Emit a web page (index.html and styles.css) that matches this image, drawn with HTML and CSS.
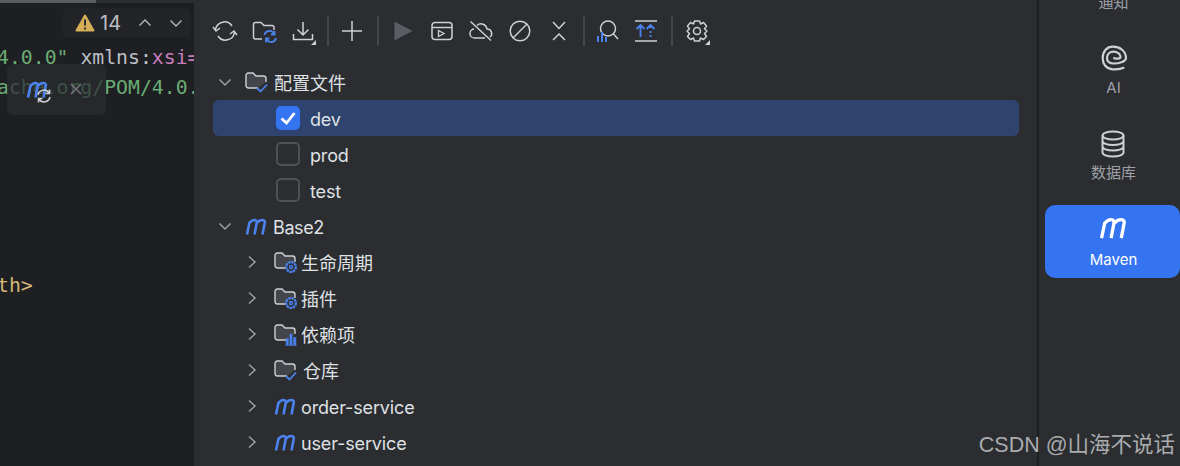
FILE: index.html
```html
<!DOCTYPE html>
<html lang="zh">
<head>
<meta charset="utf-8">
<title>Maven</title>
<link rel="stylesheet" href="styles.css">
</head>
<body>
<svg class="defs" width="0" height="0" aria-hidden="true">
  <defs>
    <symbol id="m" viewBox="0 0 22 17"><path d="M2 16.500L4.600 4M4 5.500C6 3 8 1.800 9.800 2C12 2.200 12 4 11.500 6L9.500 16.500M11.800 5C13.500 3 15.800 1.800 17.800 2C20.200 2.300 20 4 19.500 6L17.500 16.500" fill="none" stroke="currentColor" stroke-width="2.600"/></symbol>
    <symbol id="chev-d" viewBox="0 0 16 16"><path d="M2.500 5.500L8 11L13.500 5.500" fill="none" stroke="#9da0a8" stroke-width="1.500"/></symbol>
    <symbol id="chev-r" viewBox="0 0 16 16"><path d="M5 2.500L11 8L5 13.500" fill="none" stroke="#9da0a8" stroke-width="1.500"/></symbol>
    <symbol id="folder" viewBox="0 0 22 20"><path d="M13 16H3.500C2 16 1 15 1 13.500V3.500C1 2 2 1 3.500 1H8L11 4H18.500C20 4 21 5 21 6.500V10" fill="#43454a" stroke="#ced0d6" stroke-width="1.400"/></symbol>
  </defs>
</svg>
<div class="app">
  <section class="editor">
    <div class="strip"><span class="thumb"></span></div>
    <div class="inspect">
      <svg class="warn" width="20" height="18" viewBox="0 0 20 18"><path d="M10 1.500L18.500 16.500H1.500Z" fill="#d6ae58" stroke="#d6ae58" stroke-width="2" stroke-linejoin="round"/><path d="M10 5.500V11.500M10 13.500V15.500" stroke="#2b2d30" stroke-width="2"/></svg>
      <span class="inspect-count">14</span>
      <svg width="16" height="16" viewBox="0 0 16 16"><path d="M2.500 10.500L8 5L13.500 10.500" fill="none" stroke="#b4b8bf" stroke-width="1.400"/></svg>
      <svg width="16" height="16" viewBox="0 0 16 16"><path d="M2.500 5.500L8 11L13.500 5.500" fill="none" stroke="#b4b8bf" stroke-width="1.400"/></svg>
    </div>
    <div class="code code-first"><span class="str">4.0.0"</span> <span class="attr">xmlns</span>:<span class="ns">xsi=</span></div>
    <div class="code str">ache.org/POM/4.0.</div>
    <div class="code code-last tag">th&gt;</div>
    <div class="float">
      <svg class="float-m" width="22" height="17"><use href="#m"/></svg>
      <svg class="float-sync" width="16" height="16" viewBox="0 0 16 16"><path d="M2 7A6 6 0 0 1 13 5M14 9A6 6 0 0 1 3 11M13.500 1.500V5.500H9.500M2.500 14.500V10.500H6.500" fill="none" stroke="#ced0d6" stroke-width="1.500"/></svg>
      <svg class="float-x" width="14" height="14" viewBox="0 0 14 14"><path d="M2 2L12 12M12 2L2 12" stroke="#6f7277" stroke-width="1.600"/></svg>
    </div>
  </section>

  <section class="panel">
    <div class="toolbar">
      <svg class="tb" viewBox="0 0 24 24"><path d="M2.500 11A9 9 0 0 1 19 7M21.500 13A9 9 0 0 1 5 17" fill="none" stroke="#ced0d6" stroke-width="1.500"/><path d="M0 8L3 12L7 9M24 16L21 12L17 15" fill="none" stroke="#ced0d6" stroke-width="1.500"/></svg>
      <svg class="tb" viewBox="0 0 24 24"><path d="M10 20H3.500C2.500 20 1.500 19 1.500 18V5.500C1.500 4.500 2.500 3.500 3.500 3.500H9L12 6.500H20C21 6.500 22 7.500 22 8.500V11" fill="none" stroke="#ced0d6" stroke-width="1.500"/><path d="M12.500 16A5 5 0 0 1 22 15M24 19A5 5 0 0 1 14.500 20M22.500 12V15.500H19M14 23.500V19.500H17.500" fill="none" stroke="#4c82ee" stroke-width="1.800"/></svg>
      <svg class="tb" viewBox="0 0 24 24"><path d="M12 3V16M6.500 10.500L12 16L17.500 10.500M2.500 15V20.500H21.500V15" fill="none" stroke="#ced0d6" stroke-width="1.500"/><path d="M25 21V26H20Z" fill="#ced0d6"/></svg>
      <span class="sep"></span>
      <svg class="tb" viewBox="0 0 24 24"><path d="M12 2V22M2 12H22" stroke="#ced0d6" stroke-width="1.500"/></svg>
      <span class="sep sep-wide"></span>
      <svg class="tb" viewBox="0 0 24 24"><path d="M3.500 2.500L21.500 12L3.500 21.500Z" fill="#5a5d63"/></svg>
      <svg class="tb" viewBox="0 0 24 24"><rect x="2" y="3.500" width="20" height="17" rx="3" fill="none" stroke="#ced0d6" stroke-width="1.500"/><path d="M2 8.500H22" stroke="#ced0d6" stroke-width="1.500"/><path d="M8.500 11.500L14 14.500L8.500 17.500Z" fill="none" stroke="#ced0d6" stroke-width="1.300"/></svg>
      <svg class="tb" viewBox="0 0 24 24"><path d="M8 6.500A6 6 0 0 1 18 10A4.500 4.500 0 0 1 21 18M16 19H6A4.500 4.500 0 0 1 5 10M1.500 2.500L22 21.500" fill="none" stroke="#ced0d6" stroke-width="1.500"/></svg>
      <svg class="tb" viewBox="0 0 24 24"><circle cx="12" cy="12" r="9.800" fill="none" stroke="#ced0d6" stroke-width="1.500"/><path d="M5 19L19 5" stroke="#ced0d6" stroke-width="1.500"/></svg>
      <svg class="tb" viewBox="0 0 24 24"><path d="M6 3L12 9.500L18 3M6 21L12 15L18 21" fill="none" stroke="#ced0d6" stroke-width="1.500"/></svg>
      <span class="sep"></span>
      <svg class="tb" viewBox="0 0 24 24"><circle cx="13" cy="9.500" r="7.500" fill="none" stroke="#ced0d6" stroke-width="1.500"/><path d="M18.500 15L23 20" stroke="#ced0d6" stroke-width="1.500"/><path d="M3 17V23M7 13V23M11 18V23" stroke="#4c82ee" stroke-width="2"/></svg>
      <svg class="tb" viewBox="0 0 24 24"><path d="M1 2H23M1 22H23" stroke="#ced0d6" stroke-width="1.500"/><path d="M6.500 18V6M2.500 10L6.500 6L10.500 10M16.500 6V9M16.500 12V14M16.500 16V18M12.500 10L16.500 6L20.500 10" fill="none" stroke="#4c82ee" stroke-width="1.800"/></svg>
      <span class="sep sep-last"></span>
      <svg class="tb" viewBox="0 0 24 24"><path d="M9.500 2H14.500L15.500 5L18.500 3.500L21.500 7L19.500 10L22 12L19.500 14.500L21.500 17.500L18.500 20.500L15.500 19L14.500 22H9.500L8.500 19L5.500 20.500L2.500 17.500L4.500 14.500L2 12L4.500 10L2.500 7L5.500 3.500L8.500 5Z" fill="none" stroke="#ced0d6" stroke-width="1.500" stroke-linejoin="round"/><circle cx="12" cy="12" r="3.500" fill="none" stroke="#ced0d6" stroke-width="1.500"/><path d="M25 21V26H20Z" fill="#ced0d6"/></svg>
    </div>

    <div class="tree">
      <div class="row lvl0">
        <svg class="chev" width="16" height="16"><use href="#chev-d"/></svg>
        <span class="ficon"><svg width="22" height="20"><use href="#folder"/></svg><svg class="badge" width="12" height="10" viewBox="0 0 12 10"><path d="M1 5L4.500 8.500L11 1.500" fill="none" stroke="#4c82ee" stroke-width="1.800"/></svg></span>
        <span>配置文件</span>
      </div>
      <div class="row profile selected"><span class="check on"><svg width="18" height="18" viewBox="0 0 18 18"><path d="M2.500 9.500L7.500 14L15.500 4" fill="none" stroke="#fff" stroke-width="2.800"/></svg></span><span class="lat">dev</span></div>
      <div class="row profile"><span class="check"></span><span class="lat">prod</span></div>
      <div class="row profile"><span class="check"></span><span class="lat">test</span></div>
      <div class="row lvl0">
        <svg class="chev" width="16" height="16"><use href="#chev-d"/></svg>
        <svg class="micon" width="22" height="17"><use href="#m"/></svg>
        <span class="lat base">Base2</span>
      </div>
      <div class="row lvl1">
        <svg class="chev" width="16" height="16"><use href="#chev-r"/></svg>
        <span class="ficon"><svg width="22" height="20"><use href="#folder"/></svg><svg class="badge gear" width="14" height="14" viewBox="0 0 13 13"><circle cx="6.500" cy="6.500" r="4.500" fill="#2b2d30" stroke="#4c82ee" stroke-width="2.200" stroke-dasharray="2.400 .6"/><circle cx="6.500" cy="6.500" r="1.400" fill="none" stroke="#4c82ee" stroke-width="1.300"/></svg></span>
        <span>生命周期</span>
      </div>
      <div class="row lvl1">
        <svg class="chev" width="16" height="16"><use href="#chev-r"/></svg>
        <span class="ficon"><svg width="22" height="20"><use href="#folder"/></svg><svg class="badge gear" width="14" height="14" viewBox="0 0 13 13"><circle cx="6.500" cy="6.500" r="4.500" fill="#2b2d30" stroke="#4c82ee" stroke-width="2.200" stroke-dasharray="2.400 .6"/><circle cx="6.500" cy="6.500" r="1.400" fill="none" stroke="#4c82ee" stroke-width="1.300"/></svg></span>
        <span>插件</span>
      </div>
      <div class="row lvl1">
        <svg class="chev" width="16" height="16"><use href="#chev-r"/></svg>
        <span class="ficon"><svg width="22" height="20"><use href="#folder"/></svg><svg class="badge gear" width="14" height="14" viewBox="0 0 13 13"><path d="M2 12V6H4V12ZM5.500 12V2H7.500V12ZM9 12V5H11V12ZM1 12.500H12" fill="#4c82ee" stroke="#4c82ee" stroke-width=".6"/></svg></span>
        <span>依赖项</span>
      </div>
      <div class="row lvl1">
        <svg class="chev" width="16" height="16"><use href="#chev-r"/></svg>
        <span class="ficon"><svg width="22" height="20"><use href="#folder"/></svg><svg class="badge" width="12" height="10" viewBox="0 0 12 10"><path d="M1 5L4.500 8.500L11 1.500" fill="none" stroke="#4c82ee" stroke-width="1.800"/></svg></span>
        <span class="tx-wide">仓库</span>
      </div>
      <div class="row lvl1">
        <svg class="chev" width="16" height="16"><use href="#chev-r"/></svg>
        <svg class="micon" width="22" height="17"><use href="#m"/></svg>
        <span class="lat">order-service</span>
      </div>
      <div class="row lvl1">
        <svg class="chev" width="16" height="16"><use href="#chev-r"/></svg>
        <svg class="micon" width="22" height="17"><use href="#m"/></svg>
        <span class="lat">user-service</span>
      </div>
    </div>
  </section>

  <aside class="side">
    <div class="side-top">通知</div>
    <div class="side-item side-ai">
      <svg width="26" height="24" viewBox="0 0 26 24"><path d="M23.300 21.500C19 23.500 14 23.500 11.700 23.300C5 23 1.700 18 1.700 12.300C1.700 5 6 .7 11.700 .7C19 .7 25 5 25 12.300C25 15 19 17.500 12.500 17.500C8 17.500 6 15 6 12.300C6 8 9 5.700 12.500 5.700C16 5.700 19.500 8 19.500 10.700C19.500 13 14 13.500 12.500 11.300" fill="none" stroke="#ced0d6" stroke-width="2.200"/></svg>
      <span>AI</span>
    </div>
    <div class="side-item side-db">
      <svg width="26" height="28" viewBox="0 0 26 28"><ellipse cx="13" cy="5.500" rx="10.500" ry="4" fill="none" stroke="#ced0d6" stroke-width="2"/><path d="M2.500 5.500V22.500C2.500 24.700 7 26.500 13 26.500C19 26.500 23.500 24.700 23.500 22.500V5.500M2.500 11C2.500 13.200 7 15 13 15C19 15 23.500 13.200 23.500 11M2.500 16.500C2.500 18.700 7 20.500 13 20.500C19 20.500 23.500 18.700 23.500 16.500" fill="none" stroke="#ced0d6" stroke-width="2"/></svg>
      <span>数据库</span>
    </div>
    <div class="side-active">
      <svg width="28" height="22"><use href="#m"/></svg>
      <span>Maven</span>
    </div>
  </aside>
</div>
<div class="mark">CSDN @山海不说话</div>
</body>
</html>
```
FILE: styles.css
```css
* { box-sizing: border-box; }
html, body { margin: 0; height: 466px; overflow: hidden; background: #2b2d30; }
body { font-family: "Inter", "Noto Sans CJK SC", sans-serif; color: #dfe1e5; position: relative; }
.defs { position: absolute; }
svg { display: block; flex: none; overflow: visible; }
.app { display: flex; height: 466px; }

.editor { width: 194px; flex: none; background: #1e1f22; position: relative; overflow: hidden; }
.strip { height: 3px; background: #2b2d30; }
.thumb { display: block; width: 96px; height: 3px; background: #5a5c60; }
.inspect { margin: 5px 4px 0 63px; height: 29px; background: #232427; border-radius: 6px 6px 0 0; display: flex; align-items: center; padding-left: 12px; color: #bcbec4; }
.inspect-count { font-size: 20px; margin-left: 5px; margin-right: 14px; width: 23px; }
.inspect svg:last-child { margin-left: 15px; }
.code { font-family: "DejaVu Sans Mono", monospace; font-size: 19.800px; line-height: 30px; height: 30px; margin-left: -3px; white-space: nowrap; color: #bcbec4; }
.code-first { margin-top: 6px; }
.code-last { margin-top: 168px; }
.str { color: #6aab73; }
.attr { color: #bcbec4; }
.ns { color: #c77dbb; }
.tag { color: #d5b778; }
.float { position: absolute; left: 7px; top: 64px; width: 99px; height: 51px; border-radius: 6px; background: rgba(43, 45, 48, .72); }
.float-m { position: absolute; left: 19px; top: 17px; color: #4c82ee; }
.float-sync { position: absolute; left: 29px; top: 24px; }
.float-x { position: absolute; left: 62px; top: 18px; }

.panel { flex: 1; min-width: 0; border-right: 2px solid #1e1f22; }
.toolbar { height: 62px; padding-left: 11.500px; display: flex; align-items: center; }
.tb { width: 24px; height: 24px; margin: 0 7.500px; }
.sep { width: 2px; height: 30px; background: #43454a; margin: 0 3px 0 4.500px; }
.sep-wide { margin: 0 4.500px 0 5.500px; }
.sep-last { margin: 0 4.500px 0 5px; }
.tree { margin: 2px 18px 0 19px; }
.row { height: 36px; display: flex; align-items: center; font-size: 18px; white-space: nowrap; }
.lat { padding-top: 2px; letter-spacing: -0.150px; }
.base { letter-spacing: -0.400px; }
.selected { background: #2e436e; border-radius: 6px; }
.lvl0 { padding-left: 4px; }
.lvl0 .chev { margin-right: 12px; }
.lvl1 { padding-left: 31px; }
.lvl1 .chev { margin-right: 14px; }
.ficon { width: 22px; height: 20px; position: relative; margin-right: 7px; flex: none; }
.lvl1 .ficon { margin-right: 5px; }
.badge { position: absolute; right: -1px; bottom: -1px; }
.gear { bottom: -2px; right: -2px; }
.micon { color: #4c82ee; margin-right: 6px; }
.lvl1 .micon { margin-right: 5px; }
.tx-wide { margin-left: 2px; }
.profile { padding-left: 63px; }
.check { width: 24px; height: 24px; border: 2px solid #4e5157; border-radius: 5px; margin-right: 10px; display: flex; align-items: center; justify-content: center; flex: none; }
.check.on { background: #3574f0; border-color: #3574f0; }

.side { width: 141px; flex: none; padding-left: 6px; display: flex; flex-direction: column; align-items: center; font-size: 15px; color: #9da0a8; overflow: hidden; }
.side-top { height: 20px; line-height: 20px; margin-top: -7px; margin-left: 2px; flex: none; }
.side-item { display: flex; flex-direction: column; align-items: center; margin-left: 2px; flex: none; }
.side-item span { line-height: 20px; }
.side-ai { margin-top: 33px; height: 52px; }
.side-ai span { margin-top: 8px; }
.side-db { margin-top: 32px; height: 53px; }
.side-db span { margin-top: 5px; }
.side-active { margin-top: 22px; width: 135px; height: 73px; background: #3574f0; border-radius: 10px; color: #fff; display: flex; flex-direction: column; align-items: center; padding-top: 12px; flex: none; }
.side-active span { line-height: 20px; margin-top: 11px; margin-left: 2px; }

.mark { position: absolute; right: 5px; top: 431px; font-family: "Liberation Sans", "Noto Sans CJK SC", sans-serif; font-size: 21.500px; line-height: 28px; color: #a9abae; }
```
